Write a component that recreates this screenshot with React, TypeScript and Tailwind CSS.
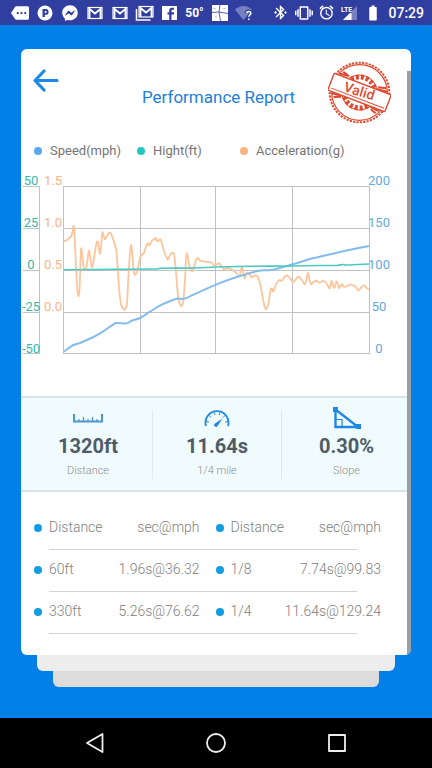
import React from 'react';
import { MdAlarm, MdBatteryFull, MdBluetoothConnected, MdMore, MdVibration } from 'react-icons/md';
import { FaFacebookMessenger } from 'react-icons/fa';

type Point = [number, number];

const acceleration: Point[] = [
  [42.7, 74.7], [45, 74.7], [47.3, 72.7], [50.3, 70], [51.7, 65], [52.3, 59.7], [53.3, 65], [55, 100],
  [56.3, 123.3], [57.7, 130], [58.7, 120], [59.7, 90], [60.3, 82.3], [61.7, 93.3], [62.7, 101], [64, 104],
  [65.7, 100], [67, 90], [68, 84.7], [69.3, 91.7], [70.7, 101], [72, 98.3], [73.7, 87.3], [75.3, 78.3],
  [76.7, 75.3], [77.7, 80], [78.7, 87.7], [80, 81.7], [81.3, 66.7], [82.7, 70], [84, 73.3], [86, 70],
  [88.3, 66.7], [90.3, 68.3], [92.7, 75], [95, 82.7], [96.3, 96.7], [98, 121.7], [100, 138.3], [102.3, 143],
  [104.3, 143.3], [106, 136.7], [107.3, 113.3], [108.7, 90], [110.3, 79], [111.7, 93.3], [113, 106.7],
  [114.3, 108.7], [116.3, 105], [118.3, 95], [119.7, 90], [123, 86.7], [125.3, 80], [126.7, 77.3],
  [128.3, 79.3], [130.7, 75], [133.3, 72.7], [134.7, 72], [136.3, 75.3], [139.3, 73.3], [141, 78.3],
  [143, 85], [145.7, 91.7], [147, 93.3], [149.7, 88], [151.7, 87], [153.3, 89.3], [155, 106.7], [157, 130],
  [158.7, 137.3], [160.3, 140], [162.3, 135], [164, 113.3], [165, 93.3], [166, 87.3], [167.7, 96.7],
  [169.3, 102.7], [171.3, 105.3], [173.3, 100], [175, 94], [176.7, 92], [179, 94.7], [182.3, 95.3],
  [187.3, 96], [190.7, 96.7], [193, 99], [195, 98.7], [198.3, 97.3], [200.3, 100.7], [203, 103.3],
  [206.7, 102], [211, 103.7], [214.3, 106], [218.3, 110], [219.7, 105], [221, 100.7], [222.3, 107.3],
  [223.7, 112.7], [225.7, 106.7], [228.3, 108.3], [231, 111.3], [233.7, 109.3], [236.7, 110.7],
  [239.3, 118.3], [242.3, 135], [244, 141.7], [245.3, 143], [247.3, 138.3], [249.3, 125], [250.7, 122.3],
  [252.3, 125.3], [255, 118.3], [258.3, 114], [260.7, 114.7], [263.7, 110.7], [266, 109.3], [269, 112],
  [272.3, 116], [276.3, 111.3], [278.3, 111], [281.7, 115.3], [284, 118.3], [285.7, 111.7], [287, 106.7],
  [288.3, 113.3], [290, 118.3], [292.3, 116], [295.7, 115], [298.3, 116.7], [301.7, 115], [305, 116.7],
  [307.3, 120.7], [308.7, 122], [310.7, 115], [313, 122], [315.7, 115.3], [318, 122], [320.7, 118],
  [322.7, 120.7], [325.7, 120.3], [329, 118.7], [334, 120.3], [337.3, 124.7], [340.3, 121], [343, 119.3],
  [345.7, 122], [348, 123.3],
];

const speed: Point[] = [
  [42.7, 185.7], [52.3, 179], [59, 177], [72.3, 171], [82.3, 165.3], [92.3, 158.3], [96.3, 157],
  [105.7, 157.3], [110.7, 154.7], [119, 152], [129, 145.7], [140.7, 138.7], [155.7, 132.7], [162.3, 133],
  [169, 130.3], [195, 118.7], [215, 111.3], [238.3, 104.7], [250, 104], [271.7, 98.3], [291.7, 92.3],
  [311.7, 87.7], [328.3, 84], [348, 80],
];

const height: Point[] = [
  [42.7, 103.8], [95, 103.3], [135, 103], [140, 102.3], [175, 102], [195, 101], [230, 100.3], [272, 100],
  [300, 99.5], [315, 99.5], [322, 98.5], [326, 99], [348, 98],
];

// smooth curve through every sample
const toPath = (points: Point[]) => {
  let d = `M${points[0][0]} ${points[0][1]}`;
  for (let i = 0; i < points.length - 1; i++) {
    const a = points[i - 1] || points[i];
    const b = points[i];
    const c = points[i + 1];
    const e = points[i + 2] || c;
    d += `C${b[0] + (c[0] - a[0]) / 6} ${b[1] + (c[1] - a[1]) / 6} ${c[0] - (e[0] - b[0]) / 6} ${
      c[1] - (e[1] - b[1]) / 6
    } ${c[0]} ${c[1]}`;
  }
  return d;
};

const rowsY = [20.5, 62.5, 104.5, 146.5, 187.5];
const colsX = [42.5, 119.5, 194.5, 271.5, 348.5];
const heightTicks = ['50', '25', '0', '-25', '-50'];
const accelerationTicks = ['1.5', '1.0', '0.5', '0.0'];
const speedTicks = ['200', '150', '100', '50', '0'];

const legend = [
  { label: 'Speed(mph)', color: 'bg-[#5aaaeb]' },
  { label: 'Hight(ft)', color: 'bg-[#26c6c0]' },
  { label: 'Acceleration(g)', color: 'bg-[#fbb27c]' },
];

const results = [
  ['60ft', '1.96s@36.32', '1/8', '7.74s@99.83'],
  ['330ft', '5.26s@76.62', '1/4', '11.64s@129.24'],
];

const GmailIcon = () => (
  <svg width="16" height="14" viewBox="0 0 16 14" fill="none" stroke="#fff">
    <rect x="1" y="1.5" width="14" height="11" strokeWidth="1.2" />
    <path d="M2.5 12.5V3L8 7.5L13.5 3v9.5" strokeWidth="1.8" />
  </svg>
);

const GmailStackIcon = () => (
  <svg width="19" height="16" viewBox="0 0 19 16" fill="none" stroke="#fff">
    <path d="M1.5 4v11h14" strokeWidth="1.5" />
    <rect x="4" y="1.5" width="14" height="10.5" strokeWidth="1.2" />
    <path d="M5.5 12V3l5.500 4.500L16.500 3v9" strokeWidth="1.8" />
  </svg>
);

const PandoraIcon = () => (
  <svg width="16" height="16" viewBox="0 0 16 16">
    <circle cx="8" cy="8" r="7.5" fill="#fff" />
    <path d="M5.5 4h3.2a2.9 2.9 0 0 1 0 5.8H7.8V12H5.5z" fill="#303f9f" />
    <circle cx="8.6" cy="6.9" r="1" fill="#fff" />
  </svg>
);

const FacebookIcon = () => (
  <svg width="15" height="14" viewBox="0 0 15 14">
    <path d="M0 0h15v14H0z" fill="#fff" />
    <path d="M9.500 14V8.500H12V6.300H9.500V5q0-1.200 1.200-1.200H12V1.800h-2q-2.800 0-2.800 2.700v1.800H5.500v2.200h1.700V14z" fill="#303f9f" />
  </svg>
);

const TileIcon = () => (
  <svg width="16" height="16" viewBox="0 0 16 16">
    <path d="M0 0h16v16H0z" fill="#fff" />
    <path d="M0 7.500l7-.5 1-7M7 7l9 1.500M7 7l1.500 9" fill="none" stroke="#303f9f" strokeWidth="0.800" />
    <path d="M1 3l3 1M11 4l3-1M3 12l2-1" fill="none" stroke="#9aa2d2" strokeWidth="0.700" />
  </svg>
);

const WifiIcon = () => (
  <svg width="19" height="16" viewBox="0 0 19 16">
    <path d="M0 4.500C5-.2 12-.2 17 4.500L8.500 15z" fill="#7680c0" />
    <path d="M11.500 8.300c0-3 4.500-2.800 4.500 0 0 1.800-2.200 1.900-2.200 3.700M13.800 13.400v1.600" fill="none" stroke="#303f9f" strokeWidth="3.500" />
    <path d="M11.800 8.300c0-2.500 4-2.300 4 0 0 1.700-2 1.800-2 3.500M13.800 13.500v1.500" fill="none" stroke="#fff" strokeWidth="1.500" />
  </svg>
);

const SignalIcon = () => (
  <svg width="17" height="16" viewBox="0 0 17 16">
    <path d="M16 1v14H2z" fill="#7680c0" />
    <path d="M10.500 6.500V15H2z" fill="#fff" />
    <path d="M0 0h11v8H0z" fill="#303f9f" />
    <text x="0" y="7" fill="#fff" className="text-[7px] font-bold">LTE</text>
  </svg>
);

const StatusBar = () => {
  const left = [
    <MdMore size={18} />,
    <PandoraIcon />,
    <FaFacebookMessenger size={16} />,
    <GmailIcon />,
    <GmailIcon />,
    <GmailStackIcon />,
    <FacebookIcon />,
    <span className="text-xs font-bold">50°</span>,
    <TileIcon />,
    <WifiIcon />,
  ];
  const right = [
    <MdBluetoothConnected size={17} />,
    <MdVibration size={18} />,
    <MdAlarm size={17} />,
    <SignalIcon />,
    <MdBatteryFull size={18} />,
  ];

  return (
    <header className="flex h-[25px] items-center justify-between bg-[#303f9f] pl-[7px] pr-2 text-white">
      <div className="flex items-center">
        {left.map((icon, id) => (
          <span key={id} className="flex w-[25px] justify-center">
            {icon}
          </span>
        ))}
      </div>
      <div className="flex items-center">
        {right.map((icon, id) => (
          <span key={id} className="flex w-[23px] justify-center">
            {icon}
          </span>
        ))}
        <time className="ml-1 text-sm font-medium">07:29</time>
      </div>
    </header>
  );
};

const Stamp = () => (
  <svg width="63" height="63" viewBox="0 0 63 63" fill="none" stroke="#df4a30" role="img" aria-label="Valid">
    <circle cx="31.500" cy="31.500" r="29.800" strokeWidth="2" strokeDasharray="2.200 1.200" />
    <circle cx="31.500" cy="31.500" r="27.800" strokeWidth="1.300" />
    <circle cx="31.500" cy="31.500" r="17.500" strokeWidth="1" />
    <g transform="rotate(21 31.500 31.500)">
      <path d="M19 22a16 16 0 0 1 25 0M19 41a16 16 0 0 0 25 0" strokeWidth="5" strokeDasharray="3 2" />
      <path d="M6 21l9-1M9 18l7 2M47 20l8-2M47 22l10-1M6 42l9-1M9 45l7-3M47 41l9 1M48 43l6 2" strokeWidth="2" />
      <rect x="1" y="22.500" width="61" height="18" rx="1" fill="#fff" strokeWidth="1.400" />
      <path d="M3 37.500h57" strokeWidth="1" />
    </g>
    <text
      x="31"
      y="35"
      transform="rotate(17 31.500 31.500)"
      textAnchor="middle"
      fill="#df4a30"
      stroke="none"
      className="text-sm font-medium"
    >
      Valid
    </text>
  </svg>
);

const Chart = () => (
  <svg viewBox="0 0 390 200" className="block h-auto w-full text-[13px]" fill="none" textAnchor="middle">
    <g stroke="#c2c2c2">
      {rowsY.map((y) => (
        <path key={y} d={`M2 ${y}h16.500M42 ${y}h307`} />
      ))}
      {colsX.map((x) => (
        <path key={x} d={`M${x} 20v168`} />
      ))}
      <path d="M18.500 20v168" />
    </g>
    <path d={toPath(acceleration)} stroke="#fcc59c" strokeWidth="1.800" />
    <path d={toPath(speed)} stroke="#84bdeb" strokeWidth="2" />
    <path d={toPath(height)} stroke="#4cc9c0" strokeWidth="1.600" />
    {heightTicks.map((tick, id) => (
      <text key={tick} x="10" y={19 + id * 42} fill="#38b8ab">
        {tick}
      </text>
    ))}
    {accelerationTicks.map((tick, id) => (
      <text key={tick} x="32" y={19 + id * 42} fill="#fbb482">
        {tick}
      </text>
    ))}
    {speedTicks.map((tick, id) => (
      <text key={tick} x="358" y={19 + id * 42} fill="#64a9e3">
        {tick}
      </text>
    ))}
  </svg>
);

const RulerIcon = () => (
  <svg width="30" height="9" viewBox="0 0 30 9" fill="none" stroke="#4a96cf">
    <path d="M1 0v7.500h28V0" strokeWidth="2" />
    <path d="M6 5v2M10.500 3v4M15 5v2M19.500 3v4M24 5v2" strokeWidth="1.300" />
  </svg>
);

const GaugeIcon = () => (
  <svg width="26" height="17" viewBox="0 0 26 17" fill="none" stroke="#1e88e5">
    <path d="M2 16A11.500 11.500 0 1 1 24 16" strokeWidth="1.800" />
    <path d="M2 11.500l3 .5M5 5.500l2 2M10 2.500l1 2.500M16 2.500l-1 2.500M21 5.500l-2 2M24 11.500l-3 .5" />
    <path d="M18.500 8.500l-5 7.500a1.800 1.800 0 1 1-2.500-2.500z" fill="#1e88e5" stroke="none" />
  </svg>
);

const SlopeIcon = () => (
  <svg width="28" height="23" viewBox="0 0 28 23" fill="none" stroke="#1e88e5">
    <path d="M2.500 2.500V20H25z" strokeWidth="2.400" />
    <path d="M3 12.500h6V20" strokeWidth="1.200" />
    <path d="M0 0h5v5H0zM23 17h5v5h-5z" fill="#1e88e5" stroke="none" />
  </svg>
);

const stats = [
  { icon: <RulerIcon />, value: '1320ft', label: 'Distance' },
  { icon: <GaugeIcon />, value: '11.64s', label: '1/4 mile' },
  { icon: <SlopeIcon />, value: '0.30%', label: 'Slope' },
];

const Cell = ({ label, head }: { label: string; head?: boolean }) => {
  const Tag = head ? 'th' : 'td';
  return (
    <Tag className="p-0 pb-1 text-left font-light">
      <span className="flex items-center gap-[7px]">
        <span className="mt-[3px] size-2 rounded-full bg-[#119de0]" />
        {label}
      </span>
    </Tag>
  );
};

const Divider = () => (
  <tr>
    <td colSpan={5} className="p-0">
      <div className="ml-[15px] mr-6 h-px bg-[#d2d2d2]" />
    </td>
  </tr>
);

const App = () => {
  return (
    <div className="flex min-h-screen flex-col bg-[#0380e8] font-['Roboto',sans-serif]">
      <StatusBar />

      <main className="flex-1 px-[21px] pb-7 pt-6">
        <section className="relative overflow-hidden rounded-md bg-white">
          <div className="absolute bottom-0 right-0 top-[22px] w-1 bg-[#98a0a4]" />

          <div className="flex items-start pl-3 pr-5 pt-3">
            <button type="button" aria-label="Back" className="w-[76px] pt-2">
              <svg width="26" height="23" viewBox="0 0 26 23" fill="none" stroke="#1e88e5" strokeWidth="3.200" strokeLinecap="round" strokeLinejoin="round">
                <path d="M11 2L2 11.500L11 21M2.500 11.500H24" />
              </svg>
            </button>
            <h1 className="flex-1 pt-6 text-center text-[17px] leading-6 text-[#1e80d8]">Performance Report</h1>
            <Stamp />
          </div>

          <ul className="mt-[17px] flex pl-[13px] text-[13px] leading-5 text-[#757575]">
            {legend.map(({ label, color }) => (
              <li key={label} className="flex w-[103px] items-center gap-2 whitespace-nowrap">
                <span className={`size-2 shrink-0 rounded-full ${color}`} />
                {label}
              </li>
            ))}
          </ul>

          <div className="mt-[5px]">
            <Chart />
          </div>

          <div className="mt-[30px] grid h-24 grid-cols-3 border-y-2 border-[#d9e4e8] bg-[#f0fbfe] py-3 pl-[3px]">
            {stats.map(({ icon, value, label }) => (
              <div
                key={label}
                className="flex flex-col items-center border-r border-[#dfe8eb] last:border-r-0"
              >
                <div className="flex h-4 items-center">{icon}</div>
                <p className="mt-[6px] text-xl leading-7 font-bold text-[#4f5b66]">{value}</p>
                <p className="mt-[3px] text-[11px] leading-4 font-light text-[#8f8f8f]">{label}</p>
              </div>
            ))}
          </div>

          <div className="pb-[21px] pl-[13px] pr-[30px] pt-4">
            <table className="w-full table-fixed border-collapse text-sm font-light text-[#808080]">
              <colgroup>
                <col />
                <col />
                <col className="w-4" />
                <col />
                <col />
              </colgroup>
              <thead>
                <tr className="h-[41px]">
                  <Cell head label="Distance" />
                  <th className="p-0 pb-1 text-right font-light">sec@mph</th>
                  <td />
                  <Cell head label="Distance" />
                  <th className="p-0 pb-1 text-right font-light">sec@mph</th>
                </tr>
                <Divider />
              </thead>
              <tbody>
                {results.map(([first, firstTime, second, secondTime]) => (
                  <React.Fragment key={first}>
                    <tr className="h-[41px]">
                      <Cell label={first} />
                      <td className="p-0 pb-1 text-right">{firstTime}</td>
                      <td />
                      <Cell label={second} />
                      <td className="p-0 pb-1">
                        <span className="flex justify-end">{secondTime}</span>
                      </td>
                    </tr>
                    <Divider />
                  </React.Fragment>
                ))}
              </tbody>
            </table>
          </div>
        </section>
        <div className="mx-4 h-4 rounded-b-md bg-[#ededed]" />
        <div className="mx-8 h-4 rounded-b-md bg-[#dcdcdc]" />
      </main>

      <nav className="flex h-[50px] items-center justify-center gap-[99px] bg-black">
        <button type="button" aria-label="Back">
          <svg width="22" height="22" viewBox="0 0 22 22" fill="none" stroke="#eee" strokeWidth="1.800" strokeLinejoin="round">
            <path d="M18.500 2v18L3 11z" />
          </svg>
        </button>
        <button type="button" aria-label="Home">
          <svg width="22" height="22" viewBox="0 0 22 22" fill="none" stroke="#eee" strokeWidth="1.800">
            <circle cx="11" cy="11" r="9" />
          </svg>
        </button>
        <button type="button" aria-label="Recent apps">
          <svg width="22" height="22" viewBox="0 0 22 22" fill="none" stroke="#eee" strokeWidth="1.800" strokeLinejoin="round">
            <rect x="3" y="3" width="16" height="16" />
          </svg>
        </button>
      </nav>
    </div>
  );
};

export default App;
